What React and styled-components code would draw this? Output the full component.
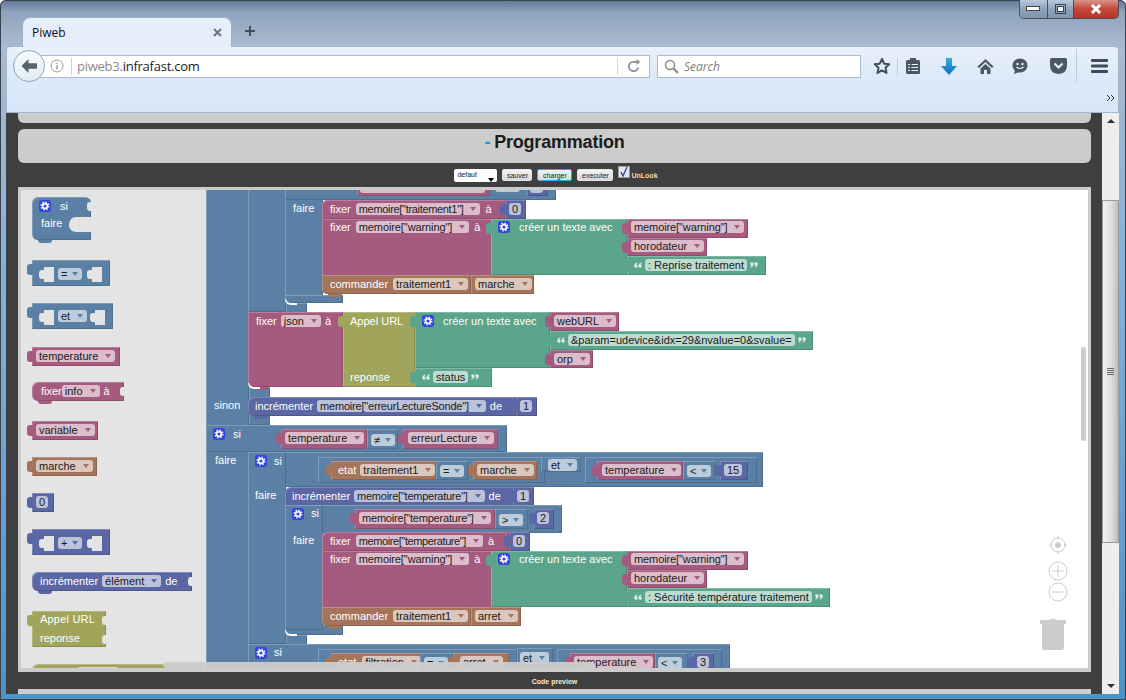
import React from "react";
import styled, { createGlobalStyle } from "styled-components";

const BLUE = "#5b80a5";
const PINK = "#a55b80";
const BROWN = "#a5745b";
const INDIGO = "#5b67a5";
const GREEN = "#5ba58c";
const OLIVE = "#a0a55b";

const GlobalStyle = createGlobalStyle`
  html, body { margin: 0; padding: 0; height: 100%; overflow: hidden; }
  body { font-family: "Liberation Sans", Arial, sans-serif; }
`;

const Window = styled.div`
  width: 1126px;
  height: 700px;
  display: flex;
  flex-direction: column;
  position: relative;
  background: linear-gradient(180deg, #5f7894 0, #8ea3bc 12px, #a9bbcf 46px, #7fb0dc 300px, #4d93c8 700px);
  box-shadow: inset 0 0 0 1px #39424d;
  border-radius: 6px 6px 0 0;
  overflow: hidden;
`;

const WinControls = styled.div`
  position: absolute;
  top: 0;
  right: 7px;
  width: 100px;
  height: 19px;
  display: flex;
  border: 1px solid #46505c;
  border-top: none;
  border-radius: 0 0 5px 5px;
  overflow: hidden;
  box-sizing: border-box;
`;

const WinButton = styled.div`
  flex: ${p => p.$flex};
  display: flex;
  align-items: center;
  justify-content: center;
  background: ${p => p.$red
    ? "linear-gradient(180deg, #d9938a 0, #c4483a 50%, #b8332a 100%)"
    : "linear-gradient(180deg, #b9c9da 0, #8ea3ba 50%, #7f95ad 100%)"};
  border-right: 1px solid #46505c;
  &:last-child { border-right: none; }
`;

const TabStrip = styled.div`
  height: 46px;
  box-sizing: border-box;
  padding: 17px 0 0 22px;
  display: flex;
  align-items: stretch;
`;

const Tab = styled.div`
  width: 210px;
  box-sizing: border-box;
  height: 30px;
  margin-bottom: -1px;
  padding: 0 9px 0 9px;
  display: flex;
  align-items: center;
  justify-content: space-between;
  background: #e6eff9;
  border: 1px solid #9fb3c8;
  border-bottom: none;
  border-radius: 8px 8px 0 0;
  font: 12px "Open Sans", sans-serif;
  color: #111;
  z-index: 1;
`;

const NewTab = styled.div`
  margin: 5px 0 0 9px;
  width: 18px;
  height: 18px;
`;

const Toolbar = styled.div`
  height: 67px;
  margin: 0 7px 0 6px;
  box-sizing: border-box;
  position: relative;
  background: linear-gradient(180deg, #e9f1fa 0, #dbe9f8 30px, #d8e7f7 100%);
  border: 1px solid #a5b8cb;
  border-radius: 4px 4px 0 0;
`;

const NavRow = styled.div`
  height: 38px;
  padding-left: 6px;
  display: flex;
  align-items: center;
  & > * { flex: none; }
`;

const BackCircle = styled.div`
  width: 32px;
  height: 32px;
  box-sizing: border-box;
  border-radius: 50%;
  border: 1px solid #8fa6bd;
  background: linear-gradient(180deg, #f7fafd, #e3ebf4);
  display: flex;
  align-items: center;
  justify-content: center;
  margin-right: -8px;
  z-index: 2;
`;

const UrlBar = styled.div`
  width: 613px;
  height: 23px;
  box-sizing: border-box;
  background: #fff;
  border: 1px solid #a9bccf;
  display: flex;
  align-items: center;
  padding-left: 12px;
`;

const UrlDivider = styled.div`
  width: 1px;
  height: 17px;
  margin: 0 5px 0 7px;
  background: #ccd4dc;
`;

const UrlText = styled.div`
  flex: 1;
  font: 13px "Open Sans", sans-serif;
  letter-spacing: -0.25px;
  color: #1b1b1b;
  span { color: #8a8a8a; }
`;

const ReloadBox = styled.div`
  width: 31px;
  height: 17px;
  border-left: 1px solid #ccd4dc;
  display: flex;
  align-items: center;
  justify-content: center;
`;

const SearchBar = styled.div`
  width: 204px;
  height: 23px;
  margin-left: 7px;
  box-sizing: border-box;
  background: #fff;
  border: 1px solid #a9bccf;
  display: flex;
  align-items: center;
  gap: 5px;
  padding-left: 6px;
  font: italic 12px "Open Sans", sans-serif;
  color: #7c7c7c;
`;

const Tools = styled.div`
  display: flex;
  align-items: center;
  margin-left: 6px;
`;

const Tool = styled.div`
  width: ${p => p.$w}px;
  display: flex;
  justify-content: center;
`;

const ToolSep = styled.div`
  width: 1px;
  height: ${p => p.$h}px;
  background: #bccbdb;
`;

const Chevrons = styled.div`
  height: 26px;
  display: flex;
  justify-content: flex-end;
  align-items: center;
  padding-right: 3px;
`;

const Viewport = styled.div`
  height: 581px;
  margin: 0 7px 0 6px;
  display: flex;
`;

const Page = styled.div`
  width: 1096px;
  box-sizing: border-box;
  background: #3f3f3f;
  padding: 0 11px 0 12px;
  display: flex;
  flex-direction: column;
`;

const TopStub = styled.div`
  height: 10px;
  background: #ccc;
  border-radius: 0 0 6px 6px;
  margin-bottom: 6px;
`;

const Heading = styled.h1`
  margin: 0;
  height: 34px;
  box-sizing: border-box;
  padding-bottom: 8px;
  background: #ccc;
  border-radius: 6px;
  display: flex;
  align-items: center;
  justify-content: center;
  font: bold 18px "Liberation Sans", sans-serif;
  letter-spacing: -0.2px;
  color: #1c1c1c;
  b { color: #0a9be6; margin-right: 4px; }
`;

const ActionBar = styled.div`
  height: 24px;
  display: flex;
  align-items: center;
  justify-content: center;
  padding-left: 3px;
  font: 7px "Liberation Sans", sans-serif;
`;

const SelectBox = styled.div`
  width: 43px;
  height: 13px;
  box-sizing: border-box;
  background: #fff;
  border-radius: 2px;
  padding: 2px 0 0 3px;
  margin-right: 5px;
  color: #222;
  position: relative;
  &::after {
    content: "";
    position: absolute;
    right: 3px;
    bottom: 0;
    border: 3px solid transparent;
    border-top: 4px solid #000;
    border-bottom: none;
  }
`;

const ActButton = styled.div`
  height: 12px;
  width: ${p => p.$w}px;
  margin-right: 5px;
  box-sizing: border-box;
  display: flex;
  align-items: center;
  justify-content: center;
  border-radius: 2px;
  color: #222;
  background: linear-gradient(180deg, #f4f4f4, #d8d8d8);
  border: 1px solid ${p => (p.$focus ? "#2fa8ee" : "#e6e6e6")};
`;

const Check = styled.div`
  width: 12px;
  height: 12px;
  box-sizing: border-box;
  margin: -7px 1px 0 0;
  background: #e3e6f2;
  border: 1px solid #9a9a9a;
  display: flex;
  align-items: center;
  justify-content: center;
`;

const UnLook = styled.span`
  font-weight: bold;
  color: #ffd8a0;
  margin-top: 1px;
`;

const Workspace = styled.div`
  height: 485px;
  box-sizing: border-box;
  border: solid #ccc;
  border-width: 3px 3px 4px 3px;
  display: flex;
  position: relative;
`;

const Flyout = styled.div`
  width: 185px;
  background: #e4e4e4;
  position: relative;
  overflow: hidden;
`;

const Canvas = styled.div`
  flex: 1;
  background: #fff;
  position: relative;
  overflow: hidden;
`;

// the stage is shifted so blocks below can use the coordinates of the capture
const Stage = styled.div`
  position: absolute;
  left: ${p => -p.$ox}px;
  top: -190px;
`;

const Block = styled.div`
  --c: ${p => p.$c};
  position: absolute;
  left: ${p => p.$x}px;
  top: ${p => p.$y}px;
  width: ${p => p.$w}px;
  height: ${p => p.$h}px;
  box-sizing: border-box;
  background: var(--c);
  box-shadow: inset 1px 1px 0 rgba(255, 255, 255, 0.22), inset -1px -1px 0 rgba(0, 0, 0, 0.14);
  border-radius: ${p => p.$r || "0"};
  display: flex;
  align-items: flex-start;
  gap: ${p => p.$gap}px;
  padding: ${p => p.$pt}px 0 0 ${p => p.$pl}px;
  font: 11px/13px "Liberation Sans", sans-serif;
  color: #fff;
  white-space: nowrap;
`;

const Plug = styled.i`
  position: absolute;
  left: -5px;
  top: 4px;
  width: 6px;
  height: 11px;
  border-radius: 3px 0 0 3px;
  background: var(--c);
`;

const Bump = styled.i`
  position: absolute;
  left: 6px;
  bottom: -3px;
  width: 14px;
  height: 3px;
  border-radius: 0 0 7px 7px;
  background: var(--c);
  z-index: 1;
`;

const Field = styled.span`
  height: 12px;
  line-height: 12px;
  padding: 0 3px;
  display: inline-flex;
  align-items: center;
  border-radius: 3px;
  background: rgba(255, 255, 255, 0.6);
  color: #1a1a1a;
  letter-spacing: ${p => p.$ls || 0}px;
`;

const BlankField = styled(Field)`
  box-sizing: border-box;
  width: ${p => p.$w}px;
`;

const Caret = styled.i`
  margin: 0 1px 0 ${p => (p.$op ? 5 : 7)}px;
  border: 3px solid transparent;
  border-top: 4px solid var(--c);
  border-bottom: none;
`;

const QuoteMark = styled.svg`
  flex: none;
  margin-top: 3px;
  transform: ${p => (p.$close ? "rotate(180deg)" : "none")};
`;

const Tag = styled.span`
  position: absolute;
  left: ${p => p.$x}px;
  top: ${p => p.$y}px;
  font: 11px/13px "Liberation Sans", sans-serif;
  color: #fff;
  z-index: 3;
`;

const Corner = styled.i`
  position: absolute;
  left: ${p => p.$x}px;
  top: ${p => p.$y}px;
  width: 12px;
  height: 6px;
  box-sizing: border-box;
  border: solid #fff;
  border-width: 0 0 2px 1px;
  border-radius: 0 0 0 6px;
  z-index: 3;
`;

const GearBox = styled.span`
  position: ${p => (p.$free ? "absolute" : "static")};
  left: ${p => p.$x}px;
  top: ${p => p.$y}px;
  width: 12px;
  height: 12px;
  flex: none;
  display: flex;
  align-items: center;
  justify-content: center;
  border-radius: 3px;
  background: #3344dd;
  z-index: 3;
`;

const Slot = styled.i`
  position: absolute;
  left: ${p => p.$x}px;
  top: 7px;
  width: 10px;
  height: 15px;
  background: #e4e4e4;
  &::before {
    content: "";
    position: absolute;
    left: -5px;
    top: 3px;
    width: 6px;
    height: 9px;
    border-radius: 3px 0 0 3px;
    background: #e4e4e4;
  }
`;

const EdgeNotch = styled.i`
  position: absolute;
  right: 0;
  top: ${p => p.$y}px;
  width: 4px;
  height: 9px;
  border-radius: 3px 0 0 3px;
  background: #e4e4e4;
`;

const Mouth = styled.i`
  position: absolute;
  right: 0;
  top: 20px;
  width: 22px;
  height: 15px;
  border-radius: 7px 0 0 7px;
  background: #e4e4e4;
`;

const ScrollH = styled.div`
  position: absolute;
  left: 142px;
  top: 472px;
  width: 432px;
  height: 6px;
  border-radius: 3px;
  background: rgba(204, 204, 204, 0.95);
  z-index: 5;
`;

const ScrollV = styled.div`
  position: absolute;
  right: 2px;
  top: 157px;
  width: 5px;
  height: 94px;
  border-radius: 3px;
  background: #ccc;
  z-index: 5;
`;

const Controls = styled.div`
  position: absolute;
  left: 1019px;
  top: 344px;
  z-index: 5;
`;

const Bottom = styled.div`
  height: 17px;
  display: flex;
  align-items: center;
  justify-content: center;
  padding-top: 1px;
  box-sizing: border-box;
  font: bold 7px "Liberation Sans", sans-serif;
  color: #ffe9cf;
`;

const BottomEdge = styled.div`
  height: 5px;
  background: #ccc;
`;

const PageScroll = styled.div`
  width: 17px;
  background: #eee;
  display: flex;
  flex-direction: column;
  align-items: center;
`;

const ArrowBtn = styled.div`
  height: 16px;
  width: 100%;
  display: flex;
  align-items: center;
  justify-content: center;
  &::after {
    content: "";
    border: 4px solid transparent;
    ${p => (p.$down
      ? "border-top: 4px solid #333; border-bottom: none;"
      : "border-bottom: 4px solid #333; border-top: none;")}
  }
`;

const Thumb = styled.div`
  width: 100%;
  height: 343px;
  margin-top: 71px;
  box-sizing: border-box;
  border: 1px solid #9a9a9a;
  background: linear-gradient(90deg, #f2f2f2, #dcdcdc 60%, #bcbcbc);
  display: flex;
  align-items: center;
  justify-content: center;
  margin-bottom: auto;
`;

const Grip = styled.div`
  width: 7px;
  height: 7px;
  background: repeating-linear-gradient(180deg, #666 0, #666 1px, transparent 1px, transparent 2px);
`;

const F = ({ children, plain, op, ls }) => (
  <Field $ls={ls}>
    {children}
    {!plain && <Caret $op={op} />}
  </Field>
);

const B = ({ x, y, w, h = 19, c, r, plug, bump, pl = 8, pt = 3, gap = 5, children }) => (
  <Block $x={x} $y={y} $w={w} $h={h} $c={c} $r={r} $pl={pl} $pt={pt} $gap={gap}>
    {plug && <Plug />}
    {children}
    {bump && <Bump />}
  </Block>
);

const Gear = ({ x, y }) => (
  <GearBox $free={x !== undefined} $x={x} $y={y}>
    <svg width="10" height="10" viewBox="0 0 10 10">
      <circle cx="5" cy="5" r="2.4" fill="none" stroke="#fff" strokeWidth="1.6" />
      <circle cx="5" cy="5" r="3.9" fill="none" stroke="#fff" strokeWidth="1.3" strokeDasharray="1.5 1.56" />
    </svg>
  </GearBox>
);

const Quote = ({ close }) => (
  <QuoteMark $close={close} width="8" height="6" viewBox="0 0 8 6" fill="#dcece6">
    <path d="M3.400 0.300L3.600 1.100Q2.400 1.700 2.300 2.500A1.700 1.700 0 1 1 0.200 4Q0.200 1.400 3.400 0.300z" />
    <path d="M7.600 0.300L7.800 1.100Q6.600 1.700 6.500 2.500A1.700 1.700 0 1 1 4.400 4Q4.400 1.400 7.600 0.300z" />
  </QuoteMark>
);

const TextBlock = ({ x, y, w, children }) => (
  <B x={x} y={y} w={w} c={GREEN} plug pl={7} gap={3}>
    <Quote />
    <F plain>{children}</F>
    <Quote close />
  </B>
);

const CreateText = ({ y, string, stringW }) => (
  <>
    <B x={491} y={y} w={136} h={56} c={GREEN} plug pl={7} pt={2} gap={9}>
      <Gear />
      <span>créer un texte avec</span>
    </B>
    <B x={627} y={y} w={121} pt={2} c={PINK} plug pl={4}><F ls={-0.1}>memoire["warning"]</F></B>
    <B x={627} y={y + 19} w={80} h={18} pt={2} c={PINK} plug pl={4}><F>horodateur</F></B>
    <TextBlock x={627} y={y + 37} w={stringW}>{string}</TextBlock>
  </>
);

const FlyoutBlocks = () => (
  <Stage $ox={21}>
    <B x={32} y={197} w={59} h={43} c={BLUE} r="6px 6px 0 6px" bump pl={7} gap={9}>
      <Gear />
      <span>si</span>
      <EdgeNotch $y={5} />
      <Mouth />
    </B>
    <Tag $x={41} $y={217}>faire</Tag>

    <B x={32} y={260} w={78} h={26} c={BLUE} plug pl={26} pt={8}>
      <F op>=</F>
      <Slot $x={12} />
      <Slot $x={60} />
    </B>
    <B x={32} y={303} w={81} h={26} c={BLUE} plug pl={26} pt={7}>
      <F>et</F>
      <Slot $x={12} />
      <Slot $x={63} />
    </B>

    <B x={32} y={347} w={88} c={PINK} plug pl={4}><F>temperature</F></B>
    <B x={32} y={382} w={92} c={PINK} r="6px 0 0 6px" bump pl={9} gap={0}>
      <span>fixer</span>
      <F>info</F>
      <span style={{ marginLeft: 4 }}>à</span>
      <EdgeNotch $y={5} />
    </B>
    <B x={32} y={421} w={66} c={PINK} plug pl={4}><F>variable</F></B>
    <B x={32} y={457} w={65} c={BROWN} plug pl={4}><F>marche</F></B>
    <B x={32} y={493} w={22} c={INDIGO} plug pl={4}><F plain>0</F></B>
    <B x={32} y={529} w={78} h={26} c={INDIGO} plug pl={26} pt={8}>
      <F op>+</F>
      <Slot $x={12} />
      <Slot $x={60} />
    </B>
    <B x={32} y={572} w={160} c={INDIGO} r="6px 0 0 6px" bump pl={8} gap={4}>
      <span>incrémenter</span>
      <F>élément</F>
      <span>de</span>
      <EdgeNotch $y={5} />
    </B>
    <B x={32} y={611} w={74} h={36} c={OLIVE} plug pl={8} pt={2}>
      <span style={{ letterSpacing: 0.2 }}>Appel URL</span>
      <EdgeNotch $y={5} />
      <EdgeNotch $y={24} />
    </B>
    <Tag $x={40} $y={632}>reponse</Tag>
    <B x={32} y={664} w={170} h={20} c={OLIVE} r="6px 0 0 0" pl={45}><BlankField $w={42} /></B>
  </Stage>
);

const CanvasBlocks = () => (
  <Stage $ox={206}>
    {/* outer si / sinon column */}
    <B x={206} y={180} w={43} h={500} c={BLUE} />
    <B x={248} y={180} w={38} h={132} c={BLUE} />
    <B x={249} y={387} w={21} h={38} c={BLUE} />
    <B x={285} y={180} w={38} h={123} c={BLUE} />
    <B x={285} y={180} w={271} h={20} c={BLUE} />
    <B x={285} y={295} w={58} h={8} c={BLUE} />
    <B x={286} y={303} w={21} h={10} c={BLUE} />
    <Corner $x={285} $y={299} />
    <Tag $x={293} $y={202}>faire</Tag>
    <B x={357} y={180} w={133} h={16} c={PINK} pl={3} pt={1}><BlankField $w={125} /></B>
    <B x={492} y={180} w={32} h={10} c={BLUE} pl={3} pt={0}><BlankField $w={25} /></B>
    <B x={527} y={180} w={21} h={16} c={INDIGO} pl={3} pt={1}><BlankField $w={13} /></B>

    <B x={322} y={200} w={183} c={PINK} r="5px 0 0 0" pl={8}>
      <span>fixer</span>
      <F ls={-0.32}>memoire["traitement1"]</F>
      <span>à</span>
    </B>
    <B x={505} y={200} w={21} c={INDIGO} plug pl={4}><F plain>0</F></B>

    <B x={322} y={219} w={170} h={57} c={PINK} pl={8} pt={2}>
      <span>fixer</span>
      <F ls={-0.1}>memoire["warning"]</F>
      <span>à</span>
    </B>
    <CreateText y={219} string=": Reprise traitement" stringW={139} />
    <B x={322} y={275} w={149} c={BROWN} r="0 0 0 5px" bump pl={8}>
      <span>commander</span>
      <F>traitement1</F>
    </B>
    <B x={471} y={275} w={63} c={BROWN} pl={4}><F>marche</F></B>

    <B x={248} y={312} w={95} h={75} c={PINK} r="0 0 0 6px" bump pl={8} gap={4}>
      <span>fixer</span>
      <F>json</F>
      <span>à</span>
    </B>
    <Corner $x={248} $y={383} />
    <B x={343} y={312} w={72} h={75} c={OLIVE} plug pl={7}>
      <span>Appel URL</span>
    </B>
    <Tag $x={350} $y={371}>reponse</Tag>
    <B x={415} y={312} w={135} h={56} c={GREEN} plug pl={7} gap={9}>
      <Gear />
      <span>créer un texte avec</span>
    </B>
    <B x={550} y={312} w={69} c={PINK} plug pl={4}><F>webURL</F></B>
    <TextBlock x={550} y={331} w={263}>&amp;param=udevice&amp;idx=29&amp;nvalue=0&amp;svalue=</TextBlock>
    <B x={550} y={350} w={43} h={18} c={PINK} plug pl={4}><F>orp</F></B>
    <TextBlock x={415} y={368} w={77}>status</TextBlock>

    <Tag $x={214} $y={399}>sinon</Tag>
    <B x={248} y={397} w={268} c={INDIGO} r="6px 0 0 6px" bump pl={7} gap={4}>
      <span>incrémenter</span>
      <F ls={-0.2}>memoire["erreurLectureSonde"]</F>
      <span>de</span>
    </B>
    <B x={516} y={397} w={21} c={INDIGO} plug pl={4}><F plain>1</F></B>

    {/* second si */}
    <B x={206} y={425} w={301} h={27} c={BLUE} />
    <Gear x={213} y={428} />
    <Tag $x={233} $y={428}>si</Tag>
    <Tag $x={215} $y={454}>faire</Tag>
    <B x={281} y={429} w={86} h={20} c={PINK} plug pl={4}><F>temperature</F></B>
    <B x={367} y={429} w={31} h={20} c={BLUE} pl={4} pt={5}><F op>≠</F></B>
    <B x={403} y={429} w={95} h={20} c={PINK} plug pl={5}><F>erreurLecture</F></B>

    <B x={248} y={452} w={515} h={35} c={BLUE} />
    <B x={248} y={452} w={38} h={192} c={BLUE} />
    <B x={285} y={625} w={58} h={10} c={BLUE} />
    <B x={286} y={635} w={21} h={10} c={BLUE} />
    <Corner $x={285} $y={630} />
    <Gear x={255} y={455} />
    <Tag $x={274} $y={455}>si</Tag>
    <Tag $x={255} $y={489}>faire</Tag>

    <B x={318} y={457} w={227} h={26} c={BLUE} />
    <B x={331} y={461} w={105} c={BROWN} plug pl={7} gap={4}>
      <span>etat</span>
      <F>traitement1</F>
    </B>
    <B x={436} y={461} w={32} c={BLUE} pl={4} pt={4}><F op>=</F></B>
    <B x={473} y={461} w={64} c={BROWN} plug pl={4}><F>marche</F></B>
    <B x={541} y={457} w={40} h={15} c={BLUE} pl={7} pt={2}><F>et</F></B>
    <B x={585} y={457} w={172} h={26} c={BLUE} />
    <B x={597} y={461} w={86} c={PINK} plug pl={5}><F>temperature</F></B>
    <B x={683} y={461} w={32} c={BLUE} pl={4} pt={4}><F op>&lt;</F></B>
    <B x={720} y={461} w={28} c={INDIGO} plug pl={4}><F plain>15</F></B>

    <B x={285} y={487} w={230} h={19} c={INDIGO} r="6px 0 0 0" pl={7} gap={4}>
      <span>incrémenter</span>
      <F ls={-0.25}>memoire["temperature"]</F>
      <span>de</span>
    </B>
    <B x={513} y={487} w={21} c={INDIGO} plug pl={4}><F plain>1</F></B>

    <B x={285} y={505} w={277} h={28} c={BLUE} />
    <B x={285} y={505} w={38} h={125} c={BLUE} />
    <Gear x={292} y={508} />
    <Tag $x={311} $y={507}>si</Tag>
    <Tag $x={293} $y={534}>faire</Tag>
    <B x={355} y={509} w={140} h={20} c={PINK} plug pl={4}><F ls={-0.2}>memoire["temperature"]</F></B>
    <B x={495} y={509} w={33} h={20} c={BLUE} pl={4} pt={5}><F op>&gt;</F></B>
    <B x={534} y={509} w={20} h={20} c={INDIGO} plug pl={3}><F plain>2</F></B>

    <B x={322} y={532} w={187} c={PINK} r="5px 0 0 0" pl={8}>
      <span>fixer</span>
      <F ls={-0.4}>memoire["temperature"]</F>
      <span>à</span>
    </B>
    <B x={509} y={532} w={21} c={INDIGO} plug pl={4}><F plain>0</F></B>
    <B x={322} y={551} w={170} h={57} c={PINK} pl={8} pt={2}>
      <span>fixer</span>
      <F ls={-0.1}>memoire["warning"]</F>
      <span>à</span>
    </B>
    <CreateText y={551} string=": Sécurité température traitement" stringW={203} />
    <B x={322} y={607} w={149} c={BROWN} r="0 0 0 5px" bump pl={8}>
      <span>commander</span>
      <F>traitement1</F>
    </B>
    <B x={471} y={607} w={50} c={BROWN} pl={4}><F>arret</F></B>

    {/* third si, cut off by the workspace edge */}
    <B x={248} y={644} w={482} h={40} c={BLUE} />
    <Gear x={255} y={647} />
    <Tag $x={274} $y={646}>si</Tag>
    <B x={318} y={649} w={199} h={30} c={BLUE} />
    <B x={331} y={653} w={89} h={24} c={BROWN} plug pl={7} gap={6}>
      <span>etat</span>
      <F>filtration</F>
    </B>
    <B x={420} y={653} w={33} h={24} c={BLUE} pl={4} pt={4}><F op>=</F></B>
    <B x={453} y={653} w={56} h={24} c={BROWN} plug pl={7}><F>arret</F></B>
    <B x={517} y={648} w={36} h={15} c={BLUE} pl={3} pt={4}><F>et</F></B>
    <B x={557} y={649} w={165} h={30} c={BLUE} />
    <B x={570} y={653} w={85} h={24} c={PINK} plug pl={4}><F>temperature</F></B>
    <B x={655} y={653} w={33} h={24} c={BLUE} pl={3} pt={4}><F op>&lt;</F></B>
    <B x={693} y={653} w={21} h={24} c={INDIGO} plug pl={4}><F plain>3</F></B>
  </Stage>
);

const ZoomControls = () => (
  <Controls>
    <svg width="40" height="120" viewBox="0 0 40 120" fill="none" stroke="#ccc">
      <circle cx="18" cy="11" r="7" />
      <path d="M18 2v3M18 17v3M9 11h3M24 11h3" />
      <circle cx="18" cy="11" r="2.5" fill="#ccc" />
      <circle cx="18" cy="37" r="9" />
      <path d="M12 37h12M18 31v12" />
      <circle cx="18" cy="58" r="9" />
      <path d="M12 58h12" />
      <path d="M0 86h26v4H0z M9 86q4-3 8 0" fill="#ccc" stroke="none" />
      <path d="M2 90h22v24q0 2-2 2H4q-2 0-2-2z" fill="#ccc" stroke="none" />
    </svg>
  </Controls>
);

export default function App() {
  return (
    <>
      <GlobalStyle />
      <Window>
        <WinControls>
          <WinButton $flex="28">
            <svg width="14" height="6"><rect x="0.5" y="0.5" width="13" height="4" fill="#fff" stroke="#445" /></svg>
          </WinButton>
          <WinButton $flex="26">
            <svg width="11" height="10"><rect x="0.5" y="0.5" width="10" height="9" fill="none" stroke="#345" /><rect x="2.5" y="2.5" width="6" height="5" fill="#fff" stroke="#345" /></svg>
          </WinButton>
          <WinButton $flex="46" $red>
            <svg width="12" height="10"><path d="M2 1l8 8M10 1L2 9" stroke="#fff" strokeWidth="3" /></svg>
          </WinButton>
        </WinControls>

        <TabStrip>
          <Tab>
            Piweb
            <svg width="9" height="9"><path d="M1 1l7 7M8 1L1 8" stroke="#6b7a88" strokeWidth="2.2" /></svg>
          </Tab>
          <NewTab>
            <svg width="18" height="18"><path d="M9 4v10M4 9h10" stroke="#41505e" strokeWidth="2" /></svg>
          </NewTab>
        </TabStrip>

        <Toolbar>
          <NavRow>
            <BackCircle>
              <svg width="18" height="16" viewBox="0 0 18 16">
                <path d="M8.5 1L1.5 8l7 7v-4.2H17V5.200H8.500z" fill="#56616d" />
              </svg>
            </BackCircle>
            <UrlBar>
              <svg width="14" height="14" viewBox="0 0 14 14" fill="none" stroke="#9a9a9a">
                <circle cx="7" cy="7" r="6" />
                <path d="M7 6v4.500M7 3.500v1.200" strokeWidth="1.400" />
              </svg>
              <UrlDivider />
              <UrlText><span>piweb3.</span>infrafast.com</UrlText>
              <ReloadBox>
                <svg width="14" height="14" viewBox="0 0 14 14" fill="none">
                  <path d="M11 8.500A4.600 4.600 0 1 1 7.500 3H11" stroke="#8c959e" strokeWidth="2" />
                  <path d="M9.500 0L13.500 3 9.500 6z" fill="#8c959e" />
                </svg>
              </ReloadBox>
            </UrlBar>
            <SearchBar>
              <svg width="15" height="15" viewBox="0 0 15 15" fill="none" stroke="#8a8a8a">
                <circle cx="6" cy="6" r="4.500" strokeWidth="1.500" />
                <path d="M9.500 9.500L14 14" strokeWidth="2.200" />
              </svg>
              Search
            </SearchBar>
            <Tools>
              <Tool $w={30}>
                <svg width="18" height="18" viewBox="0 0 18 18">
                  <path d="M9 2l2.200 4.700 5 .6-3.700 3.500 1 5.100L9 13.400l-4.500 2.500 1-5.100L1.800 7.300l5-.6z" fill="none" stroke="#414d59" strokeWidth="2" strokeLinejoin="round" />
                </svg>
              </Tool>
              <ToolSep $h={17} />
              <Tool $w={30}>
                <svg width="16" height="18" viewBox="0 0 16 18">
                  <rect x="1" y="3" width="14" height="14" rx="1.500" fill="#4b5864" />
                  <rect x="5" y="1" width="6" height="4" fill="#4b5864" />
                  <path d="M3 7.500h2M6.500 7.500H13M3 10.500h2M6.500 10.500H13M3 13.500h2M6.500 13.500H13" stroke="#e3edf8" />
                </svg>
              </Tool>
              <Tool $w={42}>
                <svg width="16" height="17" viewBox="0 0 16 17">
                  <defs>
                    <linearGradient id="dl" x1="0" y1="0" x2="0" y2="1">
                      <stop offset="0" stopColor="#3fa6e4" />
                      <stop offset="1" stopColor="#0b72c0" />
                    </linearGradient>
                  </defs>
                  <path d="M5 0h6v8h5l-8 9-8-9h5z" fill="url(#dl)" />
                </svg>
              </Tool>
              <Tool $w={30}>
                <svg width="17" height="17" viewBox="0 0 17 17">
                  <path d="M8.500 1L0.500 8.500 2 10l6.500-6 6.500 6 1.500-1.500z" fill="#4b5864" />
                  <path d="M3.500 10.500l5-4.600 5 4.600V16h-3.500v-4H7v4H3.500z" fill="#4b5864" />
                </svg>
              </Tool>
              <Tool $w={40}>
                <svg width="16" height="17" viewBox="0 0 16 17">
                  <ellipse cx="8" cy="7.500" rx="7.500" ry="7" fill="#4b5864" />
                  <path d="M3 12l-1 4 5-2z" fill="#4b5864" />
                  <circle cx="5.500" cy="6" r="1.200" fill="#e3edf8" />
                  <circle cx="10.500" cy="6" r="1.200" fill="#e3edf8" />
                  <path d="M4.500 9q3.500 3 7 0" stroke="#e3edf8" fill="none" strokeWidth="1.200" />
                </svg>
              </Tool>
              <Tool $w={36}>
                <svg width="17" height="16" viewBox="0 0 17 16">
                  <path d="M1.500 0h14Q17 0 17 1.500V7q0 8.500-8.500 9Q0 15.500 0 7V1.500Q0 0 1.500 0z" fill="#4b5864" />
                  <path d="M4.500 5.500l4 4 4-4" stroke="#e3edf8" strokeWidth="2.200" fill="none" />
                </svg>
              </Tool>
              <ToolSep $h={34} />
              <Tool $w={44}>
                <svg width="17" height="14" viewBox="0 0 17 14">
                  <rect width="17" height="3" rx="1" fill="#3f4a55" />
                  <rect y="5.500" width="17" height="3" rx="1" fill="#3f4a55" />
                  <rect y="11" width="17" height="3" rx="1" fill="#3f4a55" />
                </svg>
              </Tool>
            </Tools>
          </NavRow>
          <Chevrons>
            <svg width="9" height="8" viewBox="0 0 9 8" fill="none" stroke="#333">
              <path d="M1 1l3 3-3 3M5 1l3 3-3 3" />
            </svg>
          </Chevrons>
        </Toolbar>

        <Viewport>
          <Page>
            <TopStub />
            <Heading><b>-</b>Programmation</Heading>
            <ActionBar>
              <SelectBox>defaut</SelectBox>
              <ActButton $w={30}>sauver</ActButton>
              <ActButton $w={35} $focus>charger</ActButton>
              <ActButton $w={36}>executer</ActButton>
              <Check>
                <svg width="10" height="10"><path d="M2 5l2 4 4-9" stroke="#35408f" strokeWidth="1.300" fill="none" /></svg>
              </Check>
              <UnLook>UnLook</UnLook>
            </ActionBar>
            <Workspace>
              <Flyout><FlyoutBlocks /></Flyout>
              <Canvas><CanvasBlocks /></Canvas>
              <ScrollH />
              <ScrollV />
              <ZoomControls />
            </Workspace>
            <Bottom>Code preview</Bottom>
            <BottomEdge />
          </Page>
          <PageScroll>
            <ArrowBtn />
            <Thumb><Grip /></Thumb>
            <ArrowBtn $down />
          </PageScroll>
        </Viewport>
      </Window>
    </>
  );
}
